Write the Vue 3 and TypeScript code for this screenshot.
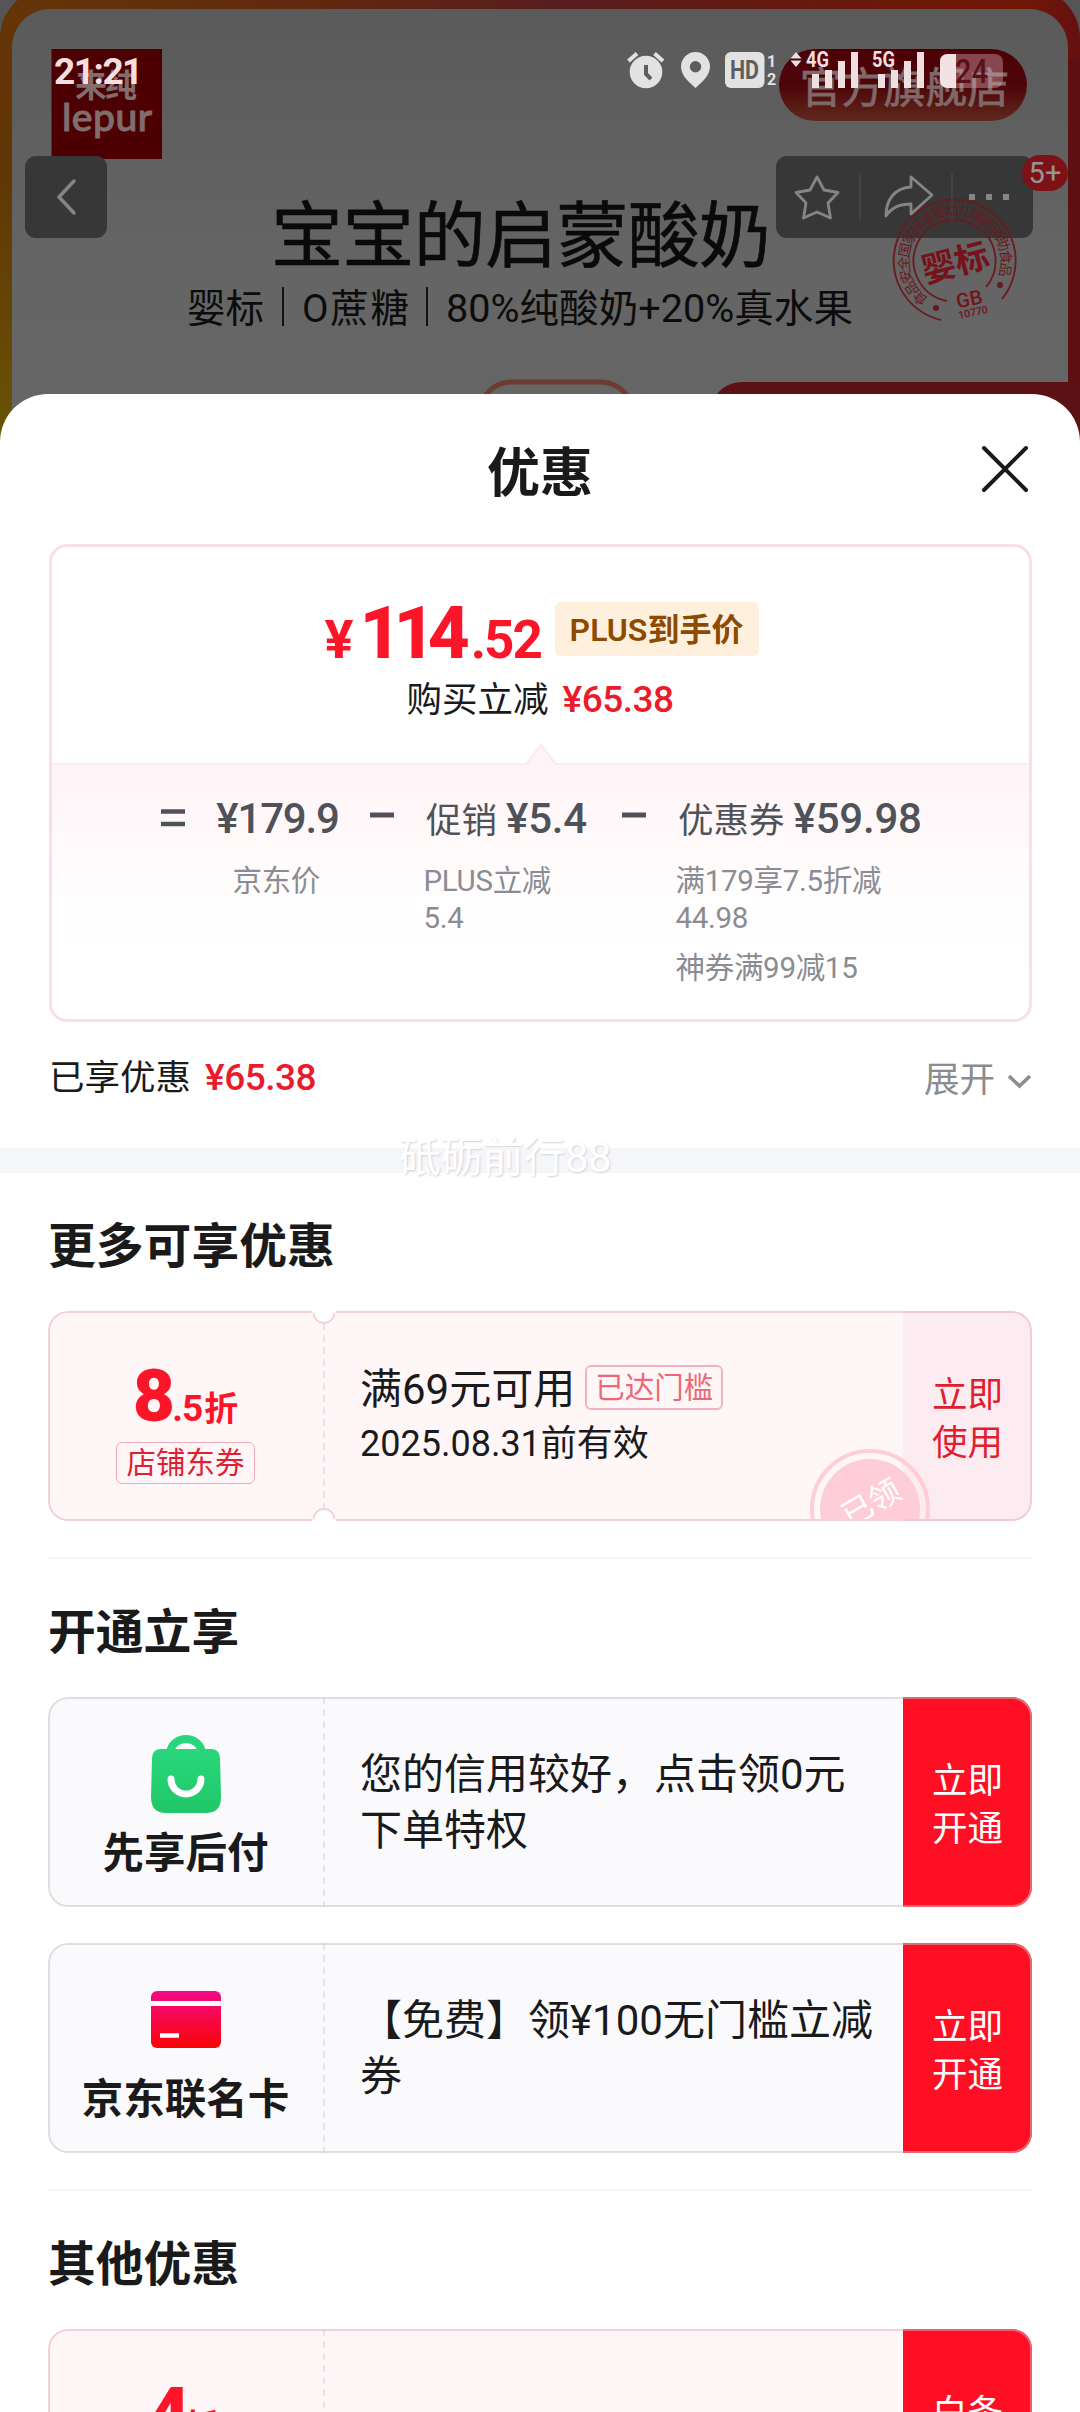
<script setup lang="ts">
interface Term { label: string; amount: string; width: number; notes: string[][]; center?: boolean }
interface Offer { name: string; icon: 'bag' | 'card'; text: string[] }

const terms: Term[] = [
  { label: '', amount: '¥179.9', width: 121, notes: [['京东价']], center: true },
  { label: '促销', amount: '¥5.4', width: 164, notes: [['PLUS立减', '5.4']] },
  { label: '优惠券', amount: '¥59.98', width: 250, notes: [['满179享7.5折减', '44.98'], ['神券满99减15']] },
]
const offers: Offer[] = [
  { name: '先享后付', icon: 'bag', text: ['您的信用较好，点击领0元', '下单特权'] },
  { name: '京东联名卡', icon: 'card', text: ['【免费】领¥100无门槛立减', '券'] },
]
const bars = [[0, 14], [13, 18], [26, 27], [39, 36]]
</script>

<template>
  <div class="page">
    <svg class="banner" width="1080" height="460" viewBox="0 0 1080 460">
      <defs>
        <linearGradient id="bg" x1="0" y1="0" x2="0" y2="1">
          <stop offset="0" stop-color="#5a5a5a" /><stop offset="0.5" stop-color="#656565" /><stop offset="1" stop-color="#666" />
        </linearGradient>
        <linearGradient id="frame" x1="0" y1="0" x2="1" y2="0">
          <stop offset="0" stop-color="#653506" /><stop offset="0.3" stop-color="#60280f" /><stop offset="0.52" stop-color="#581d20" />
          <stop offset="0.7" stop-color="#641a10" /><stop offset="0.95" stop-color="#711806" /><stop offset="1" stop-color="#641010" />
        </linearGradient>
        <linearGradient id="left" x1="0" y1="0" x2="0" y2="1">
          <stop offset="0" stop-color="#653506" stop-opacity="0" /><stop offset="0.3" stop-color="#603605" /><stop offset="1" stop-color="#6a5507" />
        </linearGradient>
        <linearGradient id="pill" x1="0" y1="0" x2="0" y2="1">
          <stop offset="0" stop-color="#4c0006" /><stop offset="0.5" stop-color="#4e0508" /><stop offset="1" stop-color="#60291d" />
        </linearGradient>
        <path id="arc" d="M 929 299 A 46 46 0 1 1 998.5 276" />
      </defs>
      <rect width="1080" height="460" fill="#555" />
      <rect x="0" y="-12" width="1080" height="560" rx="50" fill="url(#frame)" />
      <rect x="0" y="40" width="40" height="420" fill="url(#left)" />
      <rect x="1040" y="60" width="40" height="400" fill="#5c1012" />
      <rect x="12" y="9" width="1056" height="520" rx="38" fill="url(#bg)" />
      <path d="M716 395 Q726 382 744 382 H1080 V460 H716Z" fill="#5c1214" />
      <path d="M484 398 Q494 382 512 382 H600 Q618 382 629 398" fill="none" stroke="#6d3c30" stroke-width="5" />

      <rect x="51.500" y="49" width="110.500" height="110" fill="#4d0001" />
      <text x="75" y="97" font-size="32" textLength="62" font-weight="700" fill="#816d6d">来纯</text>
      <text x="62" y="131" font-size="39" textLength="90" font-weight="500" font-family="Lato, Roboto" fill="#816d6d" stroke="#816d6d">lepur</text>

      <rect x="779" y="49" width="248" height="72" rx="36" fill="url(#pill)" />
      <text x="800" y="103" font-size="41.500" textLength="209" lengthAdjust="spacingAndGlyphs" fill="#7f6969" stroke="#7f6969" stroke-width="0.8">官方旗舰店</text>

      <text x="271" y="261" font-size="72" textLength="500" fill="#0a0a0a" stroke="#0a0a0a" stroke-width="0.6">宝宝的启蒙酸奶</text>
      <g font-size="38.500" fill="#0c0c0c">
        <text x="187" y="322" textLength="77">婴标</text>
        <text x="302" y="322" textLength="107">O蔗糖</text>
        <text x="446" y="322" textLength="407" lengthAdjust="spacingAndGlyphs">80%纯酸奶+20%真水果</text>
      </g>
      <path d="M283 287V326M427 287V326" stroke="#111" stroke-width="2" />

      <g>
        <rect x="25" y="156" width="82" height="82" rx="11" fill="#373737" />
        <path d="M74 181 59 197 74 213" fill="none" stroke="#858585" stroke-width="3.500" stroke-linecap="round" stroke-linejoin="round" />
        <rect x="776" y="156" width="257" height="82" rx="11" fill="#373737" />
        <path d="M817 177 824 190 838 192.500 828 203 830.500 218 817 212 803.500 218 806 203 796 192.500 810 190Z" fill="none" stroke="#858585" stroke-width="2.800" stroke-linejoin="round" />
        <path d="M860 173V221M952 173V221" stroke="#424242" stroke-width="2" />
        <path d="M911 177 932 195 911 214V204C899 204 891 208 886 216C886 199 895 188 911 187Z" fill="none" stroke="#858585" stroke-width="2.800" stroke-linejoin="round" />
        <path d="M969 194h6v6h-6zM986 194h6v6h-6zM1003 194h6v6h-6z" fill="#858585" />
      </g>

      <g fill="none" stroke="#6b1a1e" stroke-width="1.800">
        <path d="M941 320 A61 61 0 1 1 1002 299" />
        <path d="M947 301 A41 41 0 1 1 986 287" />
      </g>
      <g fill="#671a1e">
        <text font-size="14"><textPath href="#arc" textLength="204" lengthAdjust="spacing">食品安全国家标准婴幼儿罐装辅助食品</textPath></text>
        <circle cx="936" cy="308" r="3" /><circle cx="1000" cy="285" r="3" />
      </g>
      <g fill="#75121a" text-anchor="middle">
        <text x="955" y="275" font-size="34" font-weight="700" transform="rotate(-15 955 262)">婴标</text>
        <text x="969" y="306" font-size="20" font-weight="500" transform="rotate(-12 969 298)">GB</text>
        <text x="973" y="316" font-size="10.500" font-weight="500" transform="rotate(-12 973 312)">10770</text>
      </g>
      <rect x="1022" y="155" width="46" height="36" rx="18" fill="#7d1216" />
      <text x="1045" y="182.500" font-size="29" text-anchor="middle" fill="#959595">5+</text>
    </svg>

    <header class="status">
      <span class="time">21:21</span>
      <svg width="390" height="42" viewBox="620 49 390 42" fill="#e2e2e2">
        <circle cx="646" cy="72" r="16.300" />
        <path d="M628.500 61 637 53.500M663 61 654.500 53.500" stroke="#e2e2e2" stroke-width="4" />
        <path d="M646 65V74L651 79" fill="none" stroke="#5e5e5e" stroke-width="4" />
        <path fill-rule="evenodd" d="M695.500 52A14.700 14.700 0 0 0 681 66.500C681 76 690 83 695.500 88C701 83 710 76 710 66.500A14.700 14.700 0 0 0 695.500 52ZM695.500 61a5.700 5.700 0 1 0 0 11.400a5.700 5.700 0 1 0 0-11.400Z" />
        <rect x="725" y="52" width="39.500" height="36" rx="6" />
        <text x="744.500" y="79" font-size="25" font-weight="700" text-anchor="middle" textLength="29" lengthAdjust="spacingAndGlyphs" fill="#5e5e5e">HD</text>
        <text x="767" y="67" font-size="16" font-weight="700">1</text>
        <text x="767" y="85" font-size="16" font-weight="700">2</text>
        <path d="M790.500 58.500 796 52 801.500 58.500ZM790.500 60.500 796 67 801.500 60.500Z" />
        <g v-for="(net, i) in ['4G', '5G']" :key="net" fill="#efdfe1">
          <text :x="806 + i * 66" y="67" font-size="22" font-weight="700" textLength="23" lengthAdjust="spacingAndGlyphs">{{ net }}</text>
          <rect v-for="b in bars" :key="b[0]" :x="812 + i * 66 + b[0]" :y="88 - b[1]" width="7" :height="b[1]" />
        </g>
        <rect x="940" y="54" width="63" height="34" rx="8" fill="#d8a8b0" fill-opacity="0.42" />
        <path d="M956 54H948Q940 54 940 62V80Q940 88 948 88H956Z" fill="#f2e2e4" />
        <text x="955" y="83" font-size="33" font-weight="500" textLength="33" lengthAdjust="spacingAndGlyphs" fill="#5b1018">24</text>
      </svg>
    </header>

    <main class="sheet">
      <div class="sheet-head">
        <h1>优惠</h1>
        <svg class="close" width="48" height="48" viewBox="0 0 48 48"><path d="M3 3 45 45M45 3 3 45" stroke="#1a1a1a" stroke-width="4" stroke-linecap="round" /></svg>
      </div>

      <section class="price">
        <div class="price-top">
          <div class="final">
            <div class="sum"><span class="yen">¥</span><span class="int">114</span><span class="dec">.52</span></div>
            <span class="plus">PLUS到手价</span>
          </div>
          <div class="save">购买立减<b>¥65.38</b></div>
        </div>
        <div class="formula">
          <svg class="peak" width="32" height="24" viewBox="0 0 32 24"><path d="M0 24 16 3 32 24Z" fill="#fff4f7" /><path d="M1 22 16 3 31 22" fill="none" stroke="#fbe8ec" stroke-width="2" /></svg>
          <svg class="op" width="24" height="40" viewBox="0 0 24 40"><path d="M0 12.500H24M0 25H24" stroke="#4f5259" stroke-width="4.500" /></svg>
          <template v-for="(t, i) in terms" :key="t.amount">
            <svg v-if="i" class="op" width="24" height="40" viewBox="0 0 24 40"><path d="M0 16H24" stroke="#4f5259" stroke-width="5" /></svg>
            <div class="term" :class="{ center: t.center }" :style="{ width: t.width + 'px' }">
              <div class="main"><span v-if="t.label">{{ t.label }}</span><b>{{ t.amount }}</b></div>
              <div v-for="n in t.notes" :key="n[0]" class="note"><div v-for="l in n" :key="l">{{ l }}</div></div>
            </div>
          </template>
        </div>
      </section>

      <div class="enjoyed">
        <div>已享优惠<b>¥65.38</b></div>
        <div class="expand">展开<svg width="25" height="16" viewBox="0 0 25 16"><path d="M2 2 12.500 12 23 2" fill="none" stroke="#8a8c90" stroke-width="3.500" /></svg></div>
      </div>
      <div class="band"><span class="mark">砥砺前行88</span></div>

      <section class="group">
        <h2>更多可享优惠</h2>
        <div class="card pink">
          <div class="side"><div class="disc"><span class="big">8</span><span class="small">.5</span><span class="zhe">折</span></div><span class="tag">店铺东券</span></div>
          <div class="body"><div class="line1">满69元可用<span class="reach">已达门槛</span></div><div class="line2">2025.08.31前有效</div></div>
          <div class="act soft">立即<br />使用</div>
          <svg class="got" width="124" height="72" viewBox="0 0 124 72"><circle cx="62" cy="62" r="58" fill="none" stroke="#ffcdd8" stroke-width="4" /><circle cx="62" cy="62" r="50" fill="#ffcdd8" /><text x="62" y="67" font-size="31" fill="#fff" text-anchor="middle" transform="rotate(-30 62 54)">已领</text></svg>
          <svg class="notch top" width="26" height="14" viewBox="0 0 26 14"><path d="M1 0A12 12 0 0 0 25 0Z" fill="#fff" /><path d="M2.500 1.500A10.500 10.500 0 0 0 23.500 1.500" fill="none" stroke="#f2d3da" stroke-width="1.800" /></svg>
          <svg class="notch bottom" width="26" height="14" viewBox="0 0 26 14"><path d="M1 14A12 12 0 0 1 25 14Z" fill="#fff" /><path d="M2.500 12.500A10.500 10.500 0 0 1 23.500 12.500" fill="none" stroke="#f2d3da" stroke-width="1.800" /></svg>
        </div>
      </section>

      <section class="group">
        <h2>开通立享</h2>
        <div v-for="o in offers" :key="o.name" class="card grey">
          <div class="side">
            <svg v-if="o.icon === 'bag'" class="icon" width="72" height="80" viewBox="0 0 72 80">
              <defs><linearGradient id="g" x1="0" y1="0" x2="0" y2="1"><stop offset="0" stop-color="#29d67b" /><stop offset="1" stop-color="#20c768" /></linearGradient></defs>
              <path d="M20 20C21 0 51 0 52 20" fill="none" stroke="#29d67b" stroke-width="8" />
              <path d="M11 15H61Q69.500 15 70 24L71 63Q71 79 56 79H16Q1 79 1 63L2 24Q2.500 15 11 15Z" fill="url(#g)" />
              <path d="M21 45A15 15 0 0 0 51 45" fill="none" stroke="#fff" stroke-width="7" stroke-linecap="round" />
            </svg>
            <svg v-else class="icon" width="72" height="80" viewBox="0 0 72 80">
              <defs><linearGradient id="c" x1="0" y1="0" x2="0" y2="1"><stop offset="0" stop-color="#f40a88" /><stop offset="1" stop-color="#f90505" /></linearGradient></defs>
              <rect x="1" y="11" width="70" height="57" rx="6" fill="url(#c)" />
              <path d="M0 23.500H72" stroke="#fff" stroke-width="5" /><path d="M10 55.500H29" stroke="#fff" stroke-width="4.500" />
            </svg>
            <b class="name">{{ o.name }}</b>
          </div>
          <div class="body text"><div v-for="t in o.text" :key="t">{{ t }}</div></div>
          <div class="act">立即<br />开通</div>
        </div>
      </section>

      <section class="group">
        <h2>其他优惠</h2>
        <div class="card pink">
          <div class="side"><div class="disc four"><span class="big">4</span><span class="zhe">折</span></div></div>
          <div class="body"></div>
          <div class="act">白条<br />支付</div>
        </div>
      </section>
    </main>
  </div>
</template>

<style>
body { margin: 0; background: #fff; }
</style>

<style scoped>
* { box-sizing: border-box; }
.page { position: relative; width: 1080px; height: 2412px; overflow: hidden; font-family: Roboto, "Noto Sans CJK SC", sans-serif; color: #1a1a1a; background: #666; }
.banner { position: absolute; left: 0; top: 0; }
.status { position: relative; height: 394px; padding: 49px 70px 0 54px; display: flex; justify-content: space-between; align-items: flex-start; }
.time { font-size: 37px; line-height: 45px; font-weight: 700; letter-spacing: -1.5px; color: #f3dfe0; }
.sheet { position: relative; height: 2018px; background: #fff; border-radius: 48px 48px 0 0; overflow: hidden; }
.sheet-head { position: relative; height: 150px; display: flex; justify-content: center; padding-top: 45px; }
h1 { margin: 0; font-size: 53px; line-height: 70px; font-weight: 700; }
.close { position: absolute; left: 981px; top: 51px; }
b { font-weight: 500; }

.price { margin: 0 48.5px; height: 478px; border: 3px solid #fbdfe5; border-radius: 18px; overflow: hidden; display: flex; flex-direction: column; }
.price-top { height: 216px; padding-top: 52px; }
.final { display: flex; justify-content: center; align-items: flex-start; gap: 13px; color: #fa1528; margin-left: 3px; }
.sum { display: flex; align-items: baseline; line-height: 68px; height: 74px; width: 217px; }
.yen { font-size: 54px; font-weight: 700; }
.int { font-size: 73px; letter-spacing: -8px; margin-left: 6px; font-weight: 800; }
.dec { font-size: 53px; letter-spacing: -2px; font-weight: 700; margin-left: 9px; }
.plus { margin-top: 3px; width: 204px; text-align: center; border-radius: 6px; background: #fff0dd; color: #8c4b00; font-size: 32px; line-height: 57px; height: 54px; font-weight: 600; white-space: nowrap; }
.save { display: flex; justify-content: center; gap: 14px; font-size: 35.5px; line-height: 44px; margin-top: 5px; }
.save b, .enjoyed b { color: #ea1b2d; font-size: 37px; letter-spacing: -0.5px; }
.formula { position: relative; flex: 1; display: flex; gap: 32px; padding: 34px 0 0 109.5px; border-top: 2px solid #fcebef; background: linear-gradient(#fff4f7, #fffdfd 130px, #fff); }
.peak { position: absolute; left: 473px; top: -23px; }
.op { flex: none; }
.term { flex: none; }
.main { display: flex; align-items: baseline; gap: 9px; white-space: nowrap; font-size: 35.5px; line-height: 39px; height: 64px; color: #4f5259; }
.main b { font-size: 42px; letter-spacing: -0.2px; }
.center .main b { letter-spacing: -1.2px; }
.center .main, .center .note { justify-content: center; text-align: center; }
.note { font-size: 29.5px; line-height: 37px; color: #8a8c93; white-space: nowrap; margin: 0 0 13px -2.5px; letter-spacing: -0.3px; }

.enjoyed { margin: 0 48px 0 49px; height: 126px; padding-top: 33px; display: flex; justify-content: space-between; font-size: 35.5px; line-height: 46px; }
.enjoyed b { margin-left: 14px; }
.expand { color: #8a8c90; display: flex; align-items: center; gap: 12px; height: 49px; }
.expand svg { margin-top: 5px; }
.band { position: relative; height: 25px; background: #f5f6fa; }
.mark { position: absolute; left: 399px; top: -15px; font-size: 42px; line-height: 50px; letter-spacing: -0.5px; color: #fff; text-shadow: 1px 1px 2px #d2d3d8; white-space: nowrap; }

.group { margin: 0 48px; padding: 43px 0 36px; }
.group + .group { border-top: 2px solid #f5f5f7; }
h2 { margin: 0 0 32px; font-size: 47.8px; line-height: 63px; font-weight: 700; }
.card { position: relative; display: flex; height: 210px; border-radius: 20px; overflow: hidden; }
.card + .card { margin-top: 36px; }
.card::after { content: ''; position: absolute; inset: 0; border: 2px solid rgba(195, 195, 198, 0.5); border-radius: 20px; }
.pink { background: #fff6f8; }
.pink::after { border-color: rgba(228, 170, 185, 0.5); }
.grey { background: #fafafd; }
.side { width: 277px; flex: none; padding-right: 2px; display: flex; flex-direction: column; align-items: center; position: relative; }
.side::after { content: ''; position: absolute; right: 0; top: 0; bottom: 0; width: 2px; background: repeating-linear-gradient(#e8e4e8 0 7px, transparent 7px 12px); }
.disc { color: #fa1528; display: flex; align-items: baseline; font-weight: 700; height: 82px; margin-top: 49px; line-height: 72px; }
.big { font-size: 73px; font-weight: 900; letter-spacing: -5px; }
.small { font-size: 37px; letter-spacing: -1px; margin-left: 2px; }
.zhe { font-size: 34px; margin-left: 2px; }
.four { padding-right: 4px; }
.four .zhe { margin-left: 0; }
.tag { border: 1px solid #f0aab8; border-radius: 6px; height: 42px; padding: 0 9px; line-height: 41px; font-size: 29.5px; color: #df2033; }
.body { flex: 1; padding-left: 35px; white-space: nowrap; }
.line1 { margin-top: 53px; font-size: 42px; line-height: 52px; display: flex; }
.reach { margin: 1px 0 0 10px; border: 2px solid #f2b3be; border-radius: 6px; height: 45px; padding: 0 8px; line-height: 43px; font-size: 29.5px; color: #eb6976; }
.line2 { margin-top: 4px; font-size: 36px; line-height: 48px; }
.act { width: 129px; flex: none; padding-top: 60px; text-align: center; font-size: 35.5px; line-height: 48px; color: #fff; background: #ff0f23; }
.soft { background: #fdebf2; color: #df1f30; }
.got { position: absolute; left: 760px; top: 136px; z-index: 1; }
.notch { position: absolute; left: 263px; z-index: 2; }
.top { top: 0; }
.bottom { bottom: 0; }
.icon { margin-top: 37px; }
.name { font-size: 41.5px; line-height: 50px; font-weight: 700; margin-top: 15px; }
.text { padding-top: 50px; font-size: 42px; line-height: 56px; }
</style>
